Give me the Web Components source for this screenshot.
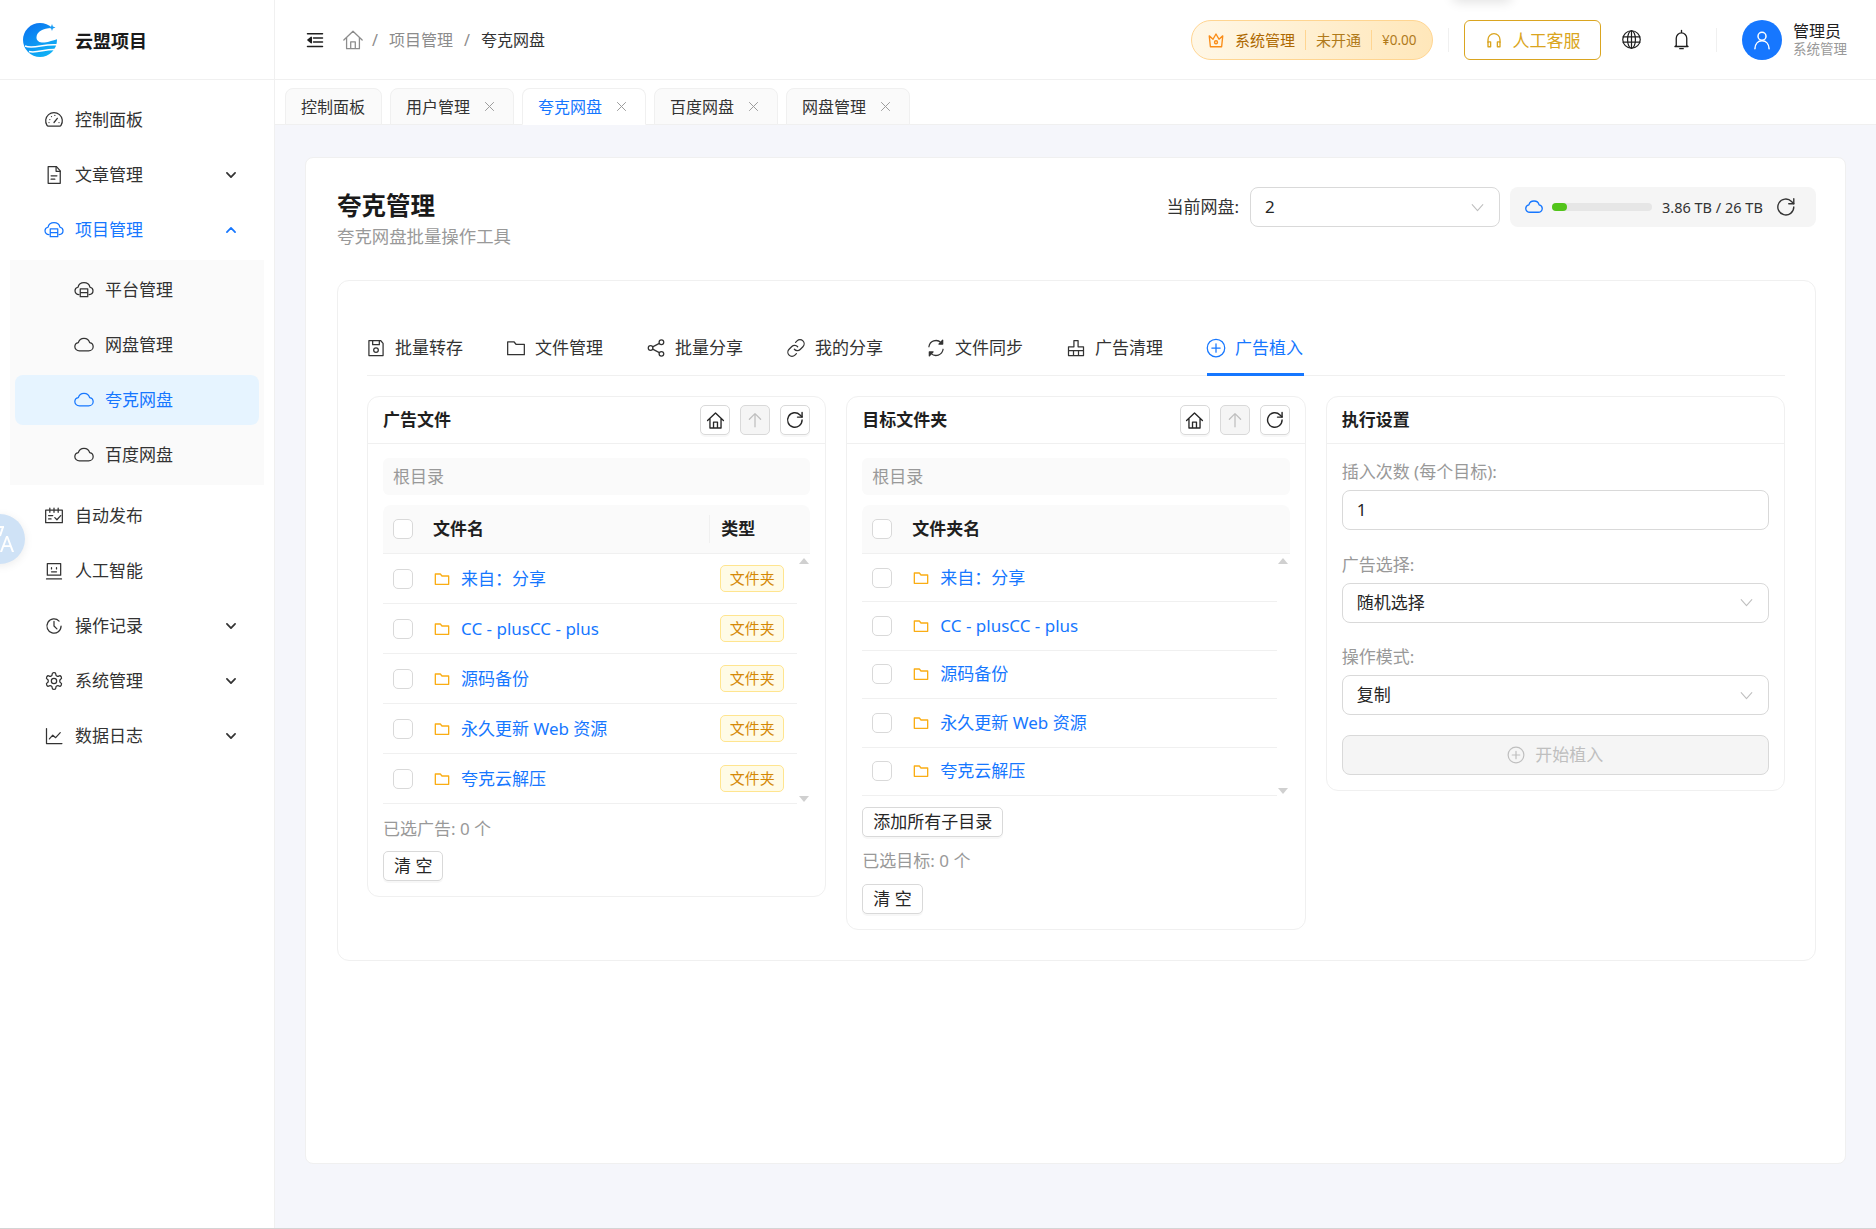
<!DOCTYPE html>
<html lang="zh-CN">
<head>
<meta charset="utf-8">
<title>夸克管理</title>
<style>
  html, body { margin: 0; height: 100%; overflow: hidden; background: #fff; }
  body { font-family: "Noto Sans", "Noto Sans CJK SC", sans-serif; color: #262626; }
</style>
</head>
<body>
<app-shell>
  <side-menu slot="side">
    <menu-item icon="dashboard" label="控制面板"></menu-item>
    <menu-item icon="file" label="文章管理" arrow="down"></menu-item>
    <menu-item icon="cloudbox" label="项目管理" arrow="up" active></menu-item>
    <sub-menu>
      <menu-item icon="cloudbox" label="平台管理" sub></menu-item>
      <menu-item icon="cloud" label="网盘管理" sub></menu-item>
      <menu-item icon="cloud" label="夸克网盘" sub active selected></menu-item>
      <menu-item icon="cloud" label="百度网盘" sub></menu-item>
    </sub-menu>
    <menu-item icon="schedule" label="自动发布"></menu-item>
    <menu-item icon="robot" label="人工智能"></menu-item>
    <menu-item icon="history" label="操作记录" arrow="down"></menu-item>
    <menu-item icon="setting" label="系统管理" arrow="down"></menu-item>
    <menu-item icon="chart" label="数据日志" arrow="down"></menu-item>
  </side-menu>
  <top-bar slot="top"></top-bar>
  <tab-strip slot="top">
    <page-tab label="控制面板"></page-tab>
    <page-tab label="用户管理" closable></page-tab>
    <page-tab label="夸克网盘" closable active></page-tab>
    <page-tab label="百度网盘" closable></page-tab>
    <page-tab label="网盘管理" closable></page-tab>
  </tab-strip>
  <quark-page>
    <work-tabs slot="tabs">
      <work-tab icon="save" label="批量转存"></work-tab>
      <work-tab icon="folder" label="文件管理"></work-tab>
      <work-tab icon="share" label="批量分享"></work-tab>
      <work-tab icon="link" label="我的分享"></work-tab>
      <work-tab icon="sync" label="文件同步"></work-tab>
      <work-tab icon="clear" label="广告清理"></work-tab>
      <work-tab icon="pluscircle" label="广告植入" active></work-tab>
    </work-tabs>
    <file-panel heading="广告文件" column="文件名" type-column row-height="50" summary="已选广告: 0 个"></file-panel>
    <file-panel heading="目标文件夹" column="文件夹名" row-height="48.4" summary="已选目标: 0 个" add-all></file-panel>
    <settings-panel></settings-panel>
  </quark-page>
  <lang-float></lang-float>
</app-shell>

<script>
const ICONS = {
  dashboard: '<path d="M3.6 18.5A10 10 0 1 1 20.4 18.5c-.3.5-.8.8-1.4.8H5c-.6 0-1.1-.3-1.4-.8z"/><path d="M12 15l4-5M7 11.5h.01M9 7.8h.01M13 6.5h.01M6 15h.01M18 15h.01"/>',
  file: '<path d="M5 2h10l4.5 5v15H5z"/><path d="M14.5 2v5.5h5M8.5 13h7M8.5 17h4.5"/>',
  cloudbox: '<path d="M6 17.5c-2.8 0-4.8-2-4.8-4.5 0-2.2 1.6-4 3.6-4.3C5.6 5.4 8.5 3.2 12 3.2s6.400 2.200 7.200 5.500c2 .3 3.600 2.100 3.600 4.300 0 2.500-2 4.500-4.800 4.500"/><path d="M7.500 10.500h9v9.500h-9zM7.500 15.200h9"/>',
  cloud: '<path d="M6.500 19C3.400 19 1 16.800 1 14c0-2.500 1.800-4.500 4.200-4.900C6 6 8.800 4 12 4s6 2 6.800 5.100C21.200 9.500 23 11.500 23 14c0 2.800-2.400 5-5.500 5z"/>',
  schedule: '<path d="M2 5h20v15H2zM7 2.500v5M12 2.500v5M17 2.500v5M5.500 11.500h5M5.500 15.500h3M13 14l2.500 2.500L20 11.500"/>',
  robot: '<path d="M4 3h16v14H4zM3 21.500h18M9 8v1.500M15 8v1.500M9 13h6"/>',
  history: '<path d="M20.500 12a8.500 8.500 0 1 1-2.400-5.900"/><path d="M12 6.500V12l3.500 3.500"/>',
  setting: '<path d="M12.220 2h-.44a2 2 0 0 0-2 2v.18a2 2 0 0 1-1 1.730l-.43.25a2 2 0 0 1-2 0l-.15-.08a2 2 0 0 0-2.730.73l-.22.38a2 2 0 0 0 .73 2.730l.15.1a2 2 0 0 1 1 1.720v.51a2 2 0 0 1-1 1.740l-.15.09a2 2 0 0 0-.73 2.730l.22.38a2 2 0 0 0 2.730.73l.15-.08a2 2 0 0 1 2 0l.43.25a2 2 0 0 1 1 1.730V20a2 2 0 0 0 2 2h.44a2 2 0 0 0 2-2v-.18a2 2 0 0 1 1-1.730l.43-.25a2 2 0 0 1 2 0l.15.08a2 2 0 0 0 2.730-.73l.22-.39a2 2 0 0 0-.73-2.730l-.15-.08a2 2 0 0 1-1-1.740v-.5a2 2 0 0 1 1-1.740l.15-.09a2 2 0 0 0 .73-2.730l-.22-.38a2 2 0 0 0-2.730-.73l-.15.08a2 2 0 0 1-2 0l-.43-.25a2 2 0 0 1-1-1.730V4a2 2 0 0 0-2-2z"/><circle cx="12" cy="12" r="3.200"/>',
  chart: '<path d="M3 3v18h18.500M6.500 15.500l4-4.500 3.500 3 5.500-6"/>',
  down: '<path d="M5 8.500l7 7 7-7"/>',
  up: '<path d="M5 15.500l7-7 7 7"/>',
  thin: '<path d="M3.500 7.500L12 17l8.500-9.500"/>',
  close: '<path d="M4.500 4.500l15 15M19.500 4.500l-15 15"/>',
  home: '<path d="M2 12l10-9.500L22 12M5 9.500V21.500h14V9.500M9.500 21.500V14h5v7.500"/>',
  crown: '<path d="M3 6.500l5 4.500 4-7 4 7 5-4.500-1.500 14.500h-15z"/><circle cx="12" cy="15" r="2"/>',
  headset: '<path d="M4 15v-3.500a8 8 0 0 1 16 0V15"/><path d="M4 14.500h3.500V21H4zM16.500 14.500H20V21h-3.500z"/>',
  globe: '<circle cx="12" cy="12" r="10"/><ellipse cx="12" cy="12" rx="4.500" ry="10"/><path d="M12 2v20M2.500 9h19M2.500 15h19"/>',
  bell: '<path d="M12 1.500v2.500M6 19V10.500a6 6 0 0 1 12 0V19l1.500 1H4.500zM10 22.500h4"/>',
  user: '<circle cx="12" cy="7.500" r="4.800"/><path d="M3.500 22.500c.3-5.800 3.800-9.500 8.500-9.500s8.200 3.700 8.500 9.500"/>',
  save: '<path d="M3.500 3h14l3 3.500v14.500h-17z"/><path d="M8 3v5h8V3"/><circle cx="12" cy="14.500" r="2.800"/>',
  folder: '<path d="M2 4.500h7.500l2.500 3h10v12.500H2z"/>',
  share: '<circle cx="18.500" cy="5" r="2.800"/><circle cx="5.500" cy="12" r="2.800"/><circle cx="18.500" cy="19" r="2.800"/><path d="M8 10.700l8-4.300M8 13.300l8 4.300"/>',
  link: '<path d="M10 13.500a4.800 4.800 0 0 0 7 .3l3.300-3.300a4.900 4.900 0 0 0-7-7L11.500 5.300"/><path d="M14 10.500a4.800 4.800 0 0 0-7-.3l-3.300 3.300a4.900 4.900 0 0 0 7 7l1.800-1.800"/>',
  sync: '<path d="M3.500 10.500A8.600 8.600 0 0 1 18 5.500"/><path d="M20.500 13.500A8.600 8.600 0 0 1 6 18.500"/><path d="M20 2.500v4.800h-4.500zM4 21.500v-4.800h4.500z" fill="currentColor"/>',
  clear: '<path d="M9.500 3h5v7.500H21V21H3V10.500h6.500zM3 15h18M9 21v-5.500M15 21v-5.500"/>',
  pluscircle: '<circle cx="12" cy="12" r="10.500"/><path d="M12 7v10M7 12h10"/>',
  reload: '<path d="M20.500 12a8.700 8.700 0 1 1-2.500-6.100L20.500 8.500"/><path d="M20.500 3v5.500H15"/>',
  arrowup: '<path d="M12 21V3.500M4.500 11L12 3.500 19.500 11"/>',
  fold: '<path d="M2 3.500h20M2 20.500h20M10 9.300h12M10 14.700h12"/><path d="M7 8.500v7L2.500 12z" fill="currentColor"/>'
};

class UiIcon extends HTMLElement {
  connectedCallback() {
    const size = this.getAttribute("size") || 18;
    const sw = this.getAttribute("sw") || 1.8;
    const root = this.shadowRoot || this.attachShadow({ mode: "open" });
    root.innerHTML = `
      <style>
        :host { display: inline-flex; flex: none; width: ${size}px; height: ${size}px; }
        svg { width: 100%; height: 100%; display: block; }
      </style>
      <svg viewBox="0 0 24 24" fill="none" stroke="currentColor" stroke-width="${sw}" stroke-linejoin="round" stroke-linecap="round">${ICONS[this.getAttribute("name")] || ""}</svg>`;
  }
}
customElements.define("ui-icon", UiIcon);

const shellTemplate = document.createElement("template");
shellTemplate.innerHTML = `
  <style>
    :host {
      display: flex;
      height: 100vh;
      box-sizing: border-box;
      border-bottom: 1px solid #d4d4d4;
      background: #f5f6fb;
      overflow: hidden;
    }
    .side { flex: none; width: 275px; box-sizing: border-box; background: #fff; border-right: 1px solid #f0f0f0; }
    .main { flex: 1; min-width: 0; display: flex; flex-direction: column; }
    .content { flex: 1; min-height: 0; display: flex; box-sizing: border-box; padding: 32px 30px 64px; }
  </style>
  <div class="side"><slot name="side"></slot></div>
  <div class="main">
    <slot name="top"></slot>
    <div class="content"><slot></slot></div>
  </div>`;
class AppShell extends HTMLElement {
  constructor() {
    super();
    this.attachShadow({ mode: "open" }).appendChild(shellTemplate.content.cloneNode(true));
  }
}
customElements.define("app-shell", AppShell);

const sideTemplate = document.createElement("template");
sideTemplate.innerHTML = `
  <style>
    :host { display: block; }
    header {
      height: 79px;
      border-bottom: 1px solid #f0f0f0;
      display: flex;
      align-items: center;
      gap: 18px;
      padding-left: 23px;
      font-size: 18px;
      font-weight: 700;
      color: #1a1a1a;
    }
    svg { width: 34px; height: 34px; display: block; }
    nav { padding: 15px 15px 0 15px; display: flex; flex-direction: column; gap: 5px; }
  </style>
  <header>
    <svg viewBox="0 0 34 34">
      <defs>
        <linearGradient id="lg" x1="0" y1="0" x2="0.6" y2="1">
          <stop offset="0" stop-color="#0a6ff0"/><stop offset="1" stop-color="#0fb0f5"/>
        </linearGradient>
      </defs>
      <circle cx="17" cy="17" r="17" fill="url(#lg)"/>
      <path d="M35 6C25 3 14 7 13.500 14c-.3 4 3.500 6 8 5.500 5-.5 9-2.500 13.500-3.500V0H30z" fill="#fff"/>
      <path d="M2 23c8 4 20-3 33-1M6 28.500c8 2 17-3 27-2" fill="none" stroke="#fff" stroke-width="1.500"/>
      <path d="M29 1l.9 2.600L32.500 4.500l-2.600.9L29 8l-.9-2.600L25.500 4.500l2.600-.9z" fill="#1a9cf5"/>
    </svg>
    <span>云盟项目</span>
  </header>
  <nav><slot></slot></nav>`;
class SideMenu extends HTMLElement {
  constructor() {
    super();
    this.attachShadow({ mode: "open" }).appendChild(sideTemplate.content.cloneNode(true));
  }
}
customElements.define("side-menu", SideMenu);

class SubMenu extends HTMLElement {
  constructor() {
    super();
    this.attachShadow({ mode: "open" }).innerHTML = `
      <style>
        :host {
          display: flex;
          flex-direction: column;
          gap: 5px;
          margin: 0 -5px 1px;
          padding: 5px;
          background: #fafafa;
        }
      </style>
      <slot></slot>`;
  }
}
customElements.define("sub-menu", SubMenu);

class MenuItem extends HTMLElement {
  connectedCallback() {
    const arrow = this.getAttribute("arrow");
    const sub = this.hasAttribute("sub");
    const active = this.hasAttribute("active");
    const selected = this.hasAttribute("selected");
    this.attachShadow({ mode: "open" }).innerHTML = `
      <style>
        :host {
          display: flex;
          align-items: center;
          height: 50px;
          gap: 11px;
          padding: 0 21px 0 ${sub ? 59 : 29}px;
          border-radius: 8px;
          font-size: 17px;
          line-height: 24px;
          color: ${active ? "#1677ff" : "#333"};
          background: ${selected ? "#e6f4ff" : "transparent"};
        }
        .label { flex: 1; }
      </style>
      <ui-icon name="${this.getAttribute("icon")}" size="20" sw="1.500"></ui-icon>
      <span class="label">${this.getAttribute("label")}</span>
      ${arrow ? `<ui-icon name="${arrow}" size="14" sw="3"></ui-icon>` : ""}`;
  }
}
customElements.define("menu-item", MenuItem);

const topTemplate = document.createElement("template");
topTemplate.innerHTML = `
  <style>
    :host {
      display: flex;
      position: relative;
      align-items: center;
      height: 79px;
      flex: none;
      background: #fff;
      border-bottom: 1px solid #f0f0f0;
      padding: 0 29px 0 31px;
      color: #1f1f1f;
    }
    .crumbs { display: flex; align-items: center; flex: 1; font-size: 16px; line-height: 24px; color: #8c8c8c; }
    .crumbs .fold { color: #1f1f1f; margin-right: 18px; }
    .crumbs .home { color: #8c8c8c; margin-right: 8px; }
    .crumbs .sep { margin: 0 11px; }
    .crumbs .first { margin: 0 11px 0 0; }
    .crumbs b { font-weight: 400; color: #333; }
    .vip {
      display: flex;
      align-items: center;
      box-sizing: border-box;
      width: 242px;
      height: 40px;
      padding: 0 14px 0 16px;
      border: 1px solid #ffd591;
      border-radius: 20px;
      background: linear-gradient(90deg, #fff7e6, #ffe7ba);
      font-size: 15px;
      white-space: nowrap;
      color: #ad6800;
    }
    .vip ui-icon { color: #fa8c16; margin: 0 10px 0 -1px; }
    .vip i { flex: none; width: 1px; height: 20px; background: #ffd591; margin: 0 10px; }
    .vip .muted { color: #b07a1a; }
    .vip .price { font-size: 13.500px; color: #b07a1a; }
    .rule { width: 1px; height: 24px; background: #f0f0f0; }
    .service {
      display: flex;
      align-items: center;
      justify-content: center;
      gap: 10px;
      box-sizing: border-box;
      width: 137px;
      height: 40px;
      margin: 0 21px 0 15px;
      border: 1px solid #daa520;
      border-radius: 6px;
      font-size: 17px;
      color: #daa520;
    }
    .globe { margin: 0 -1.500px; }
    .bell { margin: 0 -1.500px 0 30.500px; }
    .rule.last { margin: 0 25px 0 26px; }
    .avatar {
      width: 40px;
      height: 40px;
      border-radius: 50%;
      background: #1677ff;
      color: #fff;
      display: flex;
      align-items: center;
      justify-content: center;
      margin-right: 11px;
    }
    .who { display: flex; flex-direction: column; line-height: 18px; font-size: 16px; }
    .who small { font-size: 13.500px; color: #999; }
    .peek {
      position: absolute;
      top: -14px;
      left: 1177px;
      width: 60px;
      height: 14px;
      box-shadow: 0 2px 12px rgba(0, 0, 0, 0.12);
      border-radius: 8px;
    }
  </style>
  <div class="crumbs">
    <ui-icon class="fold" name="fold" size="18" sw="2"></ui-icon>
    <ui-icon class="home" name="home" size="22" sw="1.400"></ui-icon>
    <span class="first">/</span>
    <span>项目管理</span>
    <span class="sep">/</span>
    <b>夸克网盘</b>
  </div>
  <div class="vip">
    <ui-icon name="crown" size="18"></ui-icon>
    <span>系统管理</span><i></i>
    <span class="muted">未开通</span><i></i>
    <span class="price">¥0.00</span>
  </div>
  <div class="rule" style="margin-left:15px"></div>
  <div class="service"><ui-icon name="headset" size="18"></ui-icon><span>人工客服</span></div>
  <ui-icon class="globe" name="globe" size="21" sw="1.400"></ui-icon>
  <ui-icon class="bell" name="bell" size="21" sw="1.500"></ui-icon>
  <div class="rule last"></div>
  <div class="avatar"><ui-icon name="user" size="20" sw="1.800"></ui-icon></div>
  <div class="who"><span>管理员</span><small>系统管理</small></div>
  <div class="peek"></div>`;
class TopBar extends HTMLElement {
  constructor() {
    super();
    this.attachShadow({ mode: "open" }).appendChild(topTemplate.content.cloneNode(true));
  }
}
customElements.define("top-bar", TopBar);

class TabStrip extends HTMLElement {
  constructor() {
    super();
    this.attachShadow({ mode: "open" }).innerHTML = `
      <style>
        :host {
          display: flex;
          flex: none;
          align-items: flex-end;
          gap: 8px;
          box-sizing: border-box;
          height: 45px;
          padding: 8px 0 0 10px;
          background: #fff;
          border-bottom: 1px solid #f0f0f0;
        }
      </style>
      <slot></slot>`;
  }
}
customElements.define("tab-strip", TabStrip);

class PageTab extends HTMLElement {
  connectedCallback() {
    const active = this.hasAttribute("active");
    const closable = this.hasAttribute("closable");
    this.attachShadow({ mode: "open" }).innerHTML = `
      <style>
        :host {
          display: flex;
          align-items: center;
          box-sizing: border-box;
          height: 37px;
          margin-bottom: -1px;
          padding: 0 16px 0 15px;
          gap: 13px;
          border: 1px solid #f0f0f0;
          border-bottom-color: ${active ? "#fff" : "#f0f0f0"};
          border-radius: 8px 8px 0 0;
          background: ${active ? "#fff" : "#fafafa"};
          font-size: 16px;
          line-height: 24px;
          color: ${active ? "#1677ff" : "#333"};
        }
        :host([closable]) { padding-right: 17px; }
        ui-icon { color: #999; }
      </style>
      <span>${this.getAttribute("label")}</span>
      ${closable ? '<ui-icon name="close" size="13" sw="1.800"></ui-icon>' : ""}`;
  }
}
customElements.define("page-tab", PageTab);

const pageTemplate = document.createElement("template");
pageTemplate.innerHTML = `
  <style>
    :host {
      display: block;
      flex: 1;
      box-sizing: border-box;
      background: #fff;
      border: 1px solid #f0f0f0;
      border-radius: 8px;
      padding: 29px 29px 0 31px;
    }
    .head { display: flex; align-items: flex-start; }
    .titles { flex: 1; padding-top: 1px; }
    h1 { margin: 0; font-size: 24.500px; line-height: 36px; font-weight: 700; color: #1a1a1a; }
    p { margin: 0; font-size: 17.400px; line-height: 24px; color: #999; }
    .label { font-size: 17px; line-height: 40px; color: #333; margin-right: 11px; }
    disk-select { width: 250px; }
    .usage {
      display: flex;
      align-items: center;
      box-sizing: border-box;
      width: 306px;
      height: 40px;
      margin-left: 10px;
      padding: 0 20px 0 15px;
      border-radius: 8px;
      background: #f5f5f5;
      font-size: 14.500px;
      color: #333;
    }
    .usage .cloud { color: #1677ff; }
    .usage .again { margin: 0 -1px 0 -3px; }
    .bar { width: 100px; height: 8px; margin: 0 10px 0 9px; border-radius: 4px; background: #e6e6e6; }
    .bar div { width: 15px; height: 100%; border-radius: 4px; background: #52c41a; }
    .usage span { flex: 1; white-space: nowrap; }
    .box {
      margin-top: 32px;
      border: 1px solid #f0f0f0;
      border-radius: 12px;
      padding: 40px 30px 30px 29px;
    }
    .grid {
      display: grid;
      grid-template-columns: repeat(3, 1fr);
      column-gap: 20px;
      align-items: start;
      margin-top: 20px;
    }
  </style>
  <div class="head">
    <div class="titles"><h1>夸克管理</h1><p>夸克网盘批量操作工具</p></div>
    <span class="label">当前网盘:</span>
    <disk-select value="2"></disk-select>
    <div class="usage">
      <ui-icon class="cloud" name="cloud" size="18"></ui-icon>
      <div class="bar"><div></div></div>
      <span>3.86 TB / 26 TB</span>
      <ui-icon class="again" name="reload" size="22" sw="1.500"></ui-icon>
    </div>
  </div>
  <div class="box">
    <slot name="tabs"></slot>
    <div class="grid"><slot></slot></div>
  </div>`;
class QuarkPage extends HTMLElement {
  constructor() {
    super();
    this.attachShadow({ mode: "open" }).appendChild(pageTemplate.content.cloneNode(true));
  }
}
customElements.define("quark-page", QuarkPage);

class DiskSelect extends HTMLElement {
  connectedCallback() {
    this.attachShadow({ mode: "open" }).innerHTML = `
      <style>
        :host {
          display: flex;
          align-items: center;
          justify-content: space-between;
          box-sizing: border-box;
          height: 40px;
          padding: 0 14px;
          background: #fff;
          border: 1px solid #d9d9d9;
          border-radius: 8px;
          font-size: 17px;
          line-height: 24px;
          color: #262626;
        }
        ui-icon { color: #bfbfbf; }
      </style>
      <span>${this.getAttribute("value")}</span>
      ${this.hasAttribute("plain") ? "" : '<ui-icon name="thin" size="15" sw="1.700"></ui-icon>'}`;
  }
}
customElements.define("disk-select", DiskSelect);

class WorkTabs extends HTMLElement {
  constructor() {
    super();
    this.attachShadow({ mode: "open" }).innerHTML = `
      <style>
        :host {
          display: flex;
          gap: 43px;
          height: 54px;
          border-bottom: 1px solid #f0f0f0;
        }
      </style>
      <slot></slot>`;
  }
}
customElements.define("work-tabs", WorkTabs);

class WorkTab extends HTMLElement {
  connectedCallback() {
    const active = this.hasAttribute("active");
    this.attachShadow({ mode: "open" }).innerHTML = `
      <style>
        :host {
          display: flex;
          position: relative;
          align-items: center;
          gap: 9px;
          width: 97px;
          font-size: 17px;
          line-height: 24px;
          white-space: nowrap;
          color: ${active ? "#1677ff" : "#333"};
        }
        ui-icon { margin-left: -1px; }
        .ink {
          display: ${active ? "block" : "none"};
          position: absolute;
          left: 0;
          right: 0;
          bottom: -1px;
          height: 3px;
          background: #1677ff;
        }
      </style>
      <ui-icon name="${this.getAttribute("icon")}" size="20" sw="1.500"></ui-icon>
      <span>${this.getAttribute("label")}</span>
      <div class="ink"></div>`;
  }
}
customElements.define("work-tab", WorkTab);

class SmallButton extends HTMLElement {
  constructor() {
    super();
    this.attachShadow({ mode: "open" }).innerHTML = `
      <style>
        :host {
          display: inline-flex;
          align-items: center;
          justify-content: center;
          box-sizing: border-box;
          height: 30px;
          min-width: 30px;
          border: 1px solid #d9d9d9;
          border-radius: 5px;
          background: #fff;
          box-shadow: 0 2px 0 rgba(0, 0, 0, 0.03);
          font-size: 17px;
          line-height: 24px;
          color: #262626;
        }
        :host([disabled]) { background: #f5f5f5; color: #bfbfbf; box-shadow: none; }
        :host([wide]) { padding: 0 10px; }
      </style>
      <slot></slot>`;
  }
}
customElements.define("small-button", SmallButton);

const ROWS = ["来自：分享", "CC - plusCC - plus", "源码备份", "永久更新 Web 资源", "夸克云解压"];

class FilePanel extends HTMLElement {
  connectedCallback() {
    const hasType = this.hasAttribute("type-column");
    const h = this.getAttribute("row-height");
    const rows = ROWS.map(name => `
      <div class="row">
        <span class="check"></span>
        <ui-icon class="folder" name="folder" size="16" sw="2"></ui-icon>
        <span class="name">${name}</span>
        ${hasType ? '<span class="tag">文件夹</span>' : ""}
      </div>`).join("");
    this.attachShadow({ mode: "open" }).innerHTML = `
      <style>
        :host {
          display: block;
          border: 1px solid #f0f0f0;
          border-radius: 12px;
          background: #fff;
        }
        .head {
          display: flex;
          align-items: center;
          gap: 10px;
          height: 46px;
          padding: 0 15px;
          border-bottom: 1px solid #f0f0f0;
        }
        .head strong { flex: 1; font-size: 17px; font-weight: 700; line-height: 24px; color: #1f1f1f; }
        .body { padding: 14px 15px 15px; }
        .path {
          box-sizing: border-box;
          height: 37px;
          padding: 0 10px;
          border-radius: 6px;
          background: #fafafa;
          font-size: 17px;
          line-height: 37px;
          color: #999;
        }
        .thead {
          display: flex;
          align-items: center;
          box-sizing: border-box;
          height: 49px;
          margin-top: 10px;
          padding-left: 10px;
          background: #fafafa;
          border-bottom: 1px solid #f0f0f0;
          border-radius: 8px 8px 0 0;
          font-size: 17px;
          font-weight: 700;
          line-height: 24px;
          color: #1f1f1f;
        }
        .thead .title { flex: 1; margin-left: 20px; }
        .thead .type { box-sizing: border-box; width: 101px; height: 28px; padding-left: 11px; line-height: 28px; border-left: 1px solid #f0f0f0; }
        .list { display: flex; }
        .rows { flex: 1; min-width: 0; }
        .bar {
          flex: none;
          width: 13px;
          display: flex;
          flex-direction: column;
          justify-content: space-between;
          align-items: center;
          padding: 4px 0 2px;
        }
        .bar i { width: 0; height: 0; border-left: 5px solid transparent; border-right: 5px solid transparent; }
        .bar i:first-child { border-bottom: 6px solid #d0d0d0; }
        .bar i:last-child { border-top: 6px solid #d0d0d0; }
        .row {
          display: flex;
          align-items: center;
          box-sizing: border-box;
          height: ${h}px;
          padding-left: 10px;
          border-bottom: 1px solid #f0f0f0;
        }
        .check {
          flex: none;
          box-sizing: border-box;
          width: 20px;
          height: 20px;
          border: 1px solid #d9d9d9;
          border-radius: 5px;
          background: #fff;
        }
        .folder { margin-left: 21px; color: #faad14; }
        .name { margin-left: 11px; font-size: 17px; line-height: 24px; color: #1677ff; white-space: nowrap; }
        .tag {
          margin-left: auto;
          margin-right: 13px;
          box-sizing: border-box;
          width: 64px;
          height: 27px;
          border: 1px solid #ffe58f;
          border-radius: 5px;
          background: #fffbe6;
          font-size: 15px;
          line-height: 25px;
          text-align: center;
          color: #d48806;
        }
        .summary { font-size: 17px; line-height: 26px; color: #999; margin-top: 11.500px; }
        .clear { display: block; margin-top: 9.500px; }
        .clear small-button { padding: 0 10px; }
        .add { margin-top: 11px; }
      </style>
      <div class="head">
        <strong>${this.getAttribute("heading")}</strong>
        <small-button><ui-icon name="home" size="19" sw="1.700"></ui-icon></small-button>
        <small-button disabled><ui-icon name="arrowup" size="18" sw="1.700"></ui-icon></small-button>
        <small-button><ui-icon name="reload" size="20" sw="1.700"></ui-icon></small-button>
      </div>
      <div class="body">
        <div class="path">根目录</div>
        <div class="thead">
          <span class="check"></span>
          <span class="title">${this.getAttribute("column")}</span>
          ${hasType ? '<span class="type">类型</span>' : ""}
        </div>
        <div class="list">
          <div class="rows">${rows}</div>
          <div class="bar"><i></i><i></i></div>
        </div>
        ${this.hasAttribute("add-all") ? '<div class="add"><small-button wide>添加所有子目录</small-button></div>' : ""}
        <div class="summary">${this.getAttribute("summary")}</div>
        <div class="clear"><small-button>清 空</small-button></div>
      </div>`;
  }
}
customElements.define("file-panel", FilePanel);

class SettingsPanel extends HTMLElement {
  constructor() {
    super();
    this.attachShadow({ mode: "open" }).innerHTML = `
      <style>
        :host {
          display: block;
          border: 1px solid #f0f0f0;
          border-radius: 12px;
          background: #fff;
        }
        .head {
          display: flex;
          align-items: center;
          height: 46px;
          padding: 0 15px;
          border-bottom: 1px solid #f0f0f0;
          font-size: 17px;
          font-weight: 700;
          line-height: 24px;
          color: #1f1f1f;
        }
        .body { display: flex; flex-direction: column; padding: 15px; }
        label { font-size: 17px; line-height: 26px; color: #999; margin-bottom: 5px; }
        disk-select { margin-bottom: 21.500px; }
        .go {
          display: flex;
          align-items: center;
          justify-content: center;
          gap: 10px;
          box-sizing: border-box;
          height: 40px;
          margin-top: -1.500px;
          border: 1px solid #d9d9d9;
          border-radius: 8px;
          background: #f5f5f5;
          font-size: 17px;
          line-height: 24px;
          color: #bfbfbf;
        }
      </style>
      <div class="head">执行设置</div>
      <div class="body">
        <label>插入次数 (每个目标):</label>
        <disk-select value="1" plain></disk-select>
        <label>广告选择:</label>
        <disk-select value="随机选择"></disk-select>
        <label>操作模式:</label>
        <disk-select value="复制"></disk-select>
        <div class="go"><ui-icon name="pluscircle" size="18" sw="1.600"></ui-icon><span>开始植入</span></div>
      </div>`;
  }
}
customElements.define("settings-panel", SettingsPanel);

class LangFloat extends HTMLElement {
  constructor() {
    super();
    this.attachShadow({ mode: "open" }).innerHTML = `
      <style>
        :host {
          position: fixed;
          left: -25px;
          top: 514px;
          width: 50px;
          height: 50px;
          border-radius: 50%;
          background: #cfe2f6;
          box-shadow: 0 2px 10px rgba(0, 0, 0, 0.08);
          overflow: hidden;
          font-size: 22px;
          color: #fff;
        }
        span { position: absolute; left: 25px; top: 14px; line-height: 30px; }
        svg { position: absolute; left: 20px; top: 10px; width: 14px; height: 14px; }
      </style>
      <svg viewBox="0 0 14 14" fill="none" stroke="#fff" stroke-width="2"><path d="M0 3h9M8 3l-3 9"/></svg>
      <span>A</span>`;
  }
}
customElements.define("lang-float", LangFloat);
</script>
</body>
</html>
